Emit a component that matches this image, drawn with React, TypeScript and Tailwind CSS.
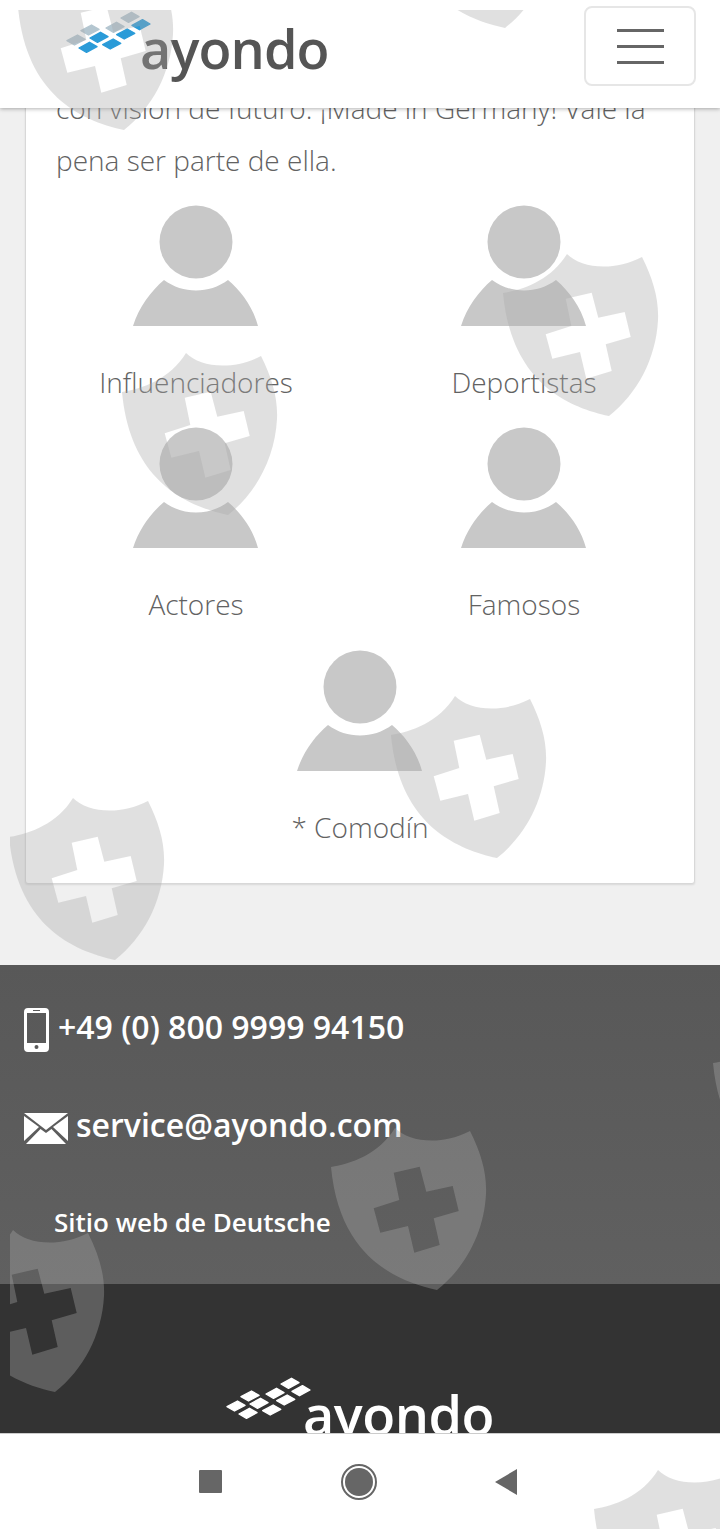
const tiles = [
  { x: 70, y: 13.3, light: true },
  { x: 81, y: 20.7, light: false },
  { x: 55, y: 23.3, light: true },
  { x: 65.7, y: 30, light: false },
  { x: 39, y: 33.3, light: false },
  { x: 51.7, y: 40, light: false },
  { x: 30, y: 26, light: true },
  { x: 16, y: 36, light: true },
  { x: 28, y: 43.3, light: false },
];

function LogoTiles({ dark }: { dark?: boolean }) {
  return (
    <svg viewBox="0 0 100 60" className="w-[100px] h-[60px] flex-none">
      {tiles.map((t) => (
        <path
          key={`${t.x}-${t.y}`}
          d={`M${t.x - 9} ${t.y + 0.7} L${t.x + 1.5} ${t.y - 5} L${t.x + 9} ${t.y - 0.7} L${t.x - 1.5} ${t.y + 5} Z`}
          fill={dark ? "#ffffff" : t.light ? "#b4c6d0" : "#2a9bd8"}
          stroke={dark ? "#ffffff" : t.light ? "#b4c6d0" : "#2a9bd8"}
          strokeWidth="1.4"
          strokeLinejoin="round"
        />
      ))}
    </svg>
  );
}

function Person({ label }: { label: string }) {
  return (
    <div className="flex flex-col items-center h-[222px]">
      <svg viewBox="0 0 126 122" className="w-[126px] h-[122px]">
        <circle cx="63" cy="37" r="36.5" fill="#c8c8c8" />
        <path
          d="M0 121 C6 102 18 86 31 75 C50 89 76 89 95 75 C108 86 120 102 125 121 Z"
          fill="#c8c8c8"
        />
      </svg>
      <span className="mt-[33px] text-[28px] leading-[44px] font-light text-[#626262]">
        {label}
      </span>
    </div>
  );
}

const shields = [
  "left-[8px] top-[-42px]",
  "left-[389px] top-[-144px]",
  "left-[493px] top-[244px]",
  "left-[112px] top-[343px]",
  "left-[381px] top-[686px]",
  "left-[-1px] top-[788px]",
  "left-[321px] top-[1118px]",
  "left-[-61px] top-[1220px]",
  "left-[703px] top-[1014px]",
  "left-[584px] top-[1460px]",
];

function Shield({ className }: { className: string }) {
  return (
    <svg viewBox="0 0 156 163" className={`absolute w-[156px] h-[163px] ${className}`}>
      <path
        fillRule="evenodd"
        fill="#a8a8a8"
        fillOpacity="0.36"
        d="M0 39 C20 36 48 26 64 0 C78 14 110 18 139 3 C150 25 156 45 155 66 C153 105 134 140 106 162 C60 152 8 125 0 39 Z M62.7 44.7 L88.7 38.7 L95.3 63.7 L121.7 58 L127.7 83 L102.7 90.3 L108.7 117 L83.3 124.7 L77 98 L49.3 104.7 L42.7 80.3 L68.3 72 Z"
      />
    </svg>
  );
}

export default function App() {
  return (
    <div className="relative flex flex-col h-[1529px] overflow-hidden bg-white font-['Open_Sans',sans-serif]">
      <header className="relative z-10 flex-none flex items-start justify-between h-[108px] bg-white shadow-[0_1px_4px_rgba(0,0,0,0.3)]">
        <div className="flex items-start pl-[60px] pt-[4px]">
          <LogoTiles />
          <span className="-ml-[20px] mt-[12px] text-[54px] leading-[64px] font-semibold tracking-[-0.9px] text-[#555555]">
            ayondo
          </span>
        </div>
        <button className="flex flex-col justify-center gap-[13px] mt-[6px] mr-[24px] w-[112px] h-[80px] items-center border-2 border-[#e6e6e6] rounded-lg">
          <span className="block w-[47px] h-[3px] bg-[#666666]" />
          <span className="block w-[47px] h-[3px] bg-[#666666]" />
          <span className="block w-[47px] h-[3px] bg-[#666666]" />
        </button>
      </header>

      <main className="flex-1 min-h-0 overflow-hidden bg-[#f0f0f0]">
        <section className="-mt-[43px] mx-[25px] bg-white border border-[#d8d8d8] rounded-[3px] shadow-[0_1px_2px_rgba(0,0,0,0.1)] pt-[16px] h-[819px]">
          <p className="mx-[30px] text-[28px] leading-[52px] font-light text-[#626262]">
            con visión de futuro. ¡Made in Germany! Vale la pena ser parte de ella.
          </p>
          <div className="grid grid-cols-2 mx-[6px] mt-[19px]">
            <Person label="Influenciadores" />
            <Person label="Deportistas" />
            <Person label="Actores" />
            <Person label="Famosos" />
            <div className="col-span-2 mt-[1px]">
              <Person label="* Comodín" />
            </div>
          </div>
        </section>

        <footer className="mt-[81px] text-white">
          <div className="h-[319px] bg-gradient-to-b from-[#585858] to-[#606060] pl-[24px] pt-[43px]">
            <div className="flex items-center gap-[9px] h-[44px]">
              <svg viewBox="0 0 25 44" className="w-[25px] h-[44px]">
                <path
                  fillRule="evenodd"
                  fill="#ffffff"
                  d="M4 0 H21 Q25 0 25 4 V40 Q25 44 21 44 H4 Q0 44 0 40 V4 Q0 0 4 0 Z M3 5 V35 H22 V5 Z M9 2 V3 H16 V2 Z M12.5 37 A2 2 0 1 0 12.5 41 A2 2 0 1 0 12.5 37 Z"
                />
              </svg>
              <span className="pb-[6px] text-[32px] leading-[38px] font-semibold">+49 (0) 800 9999 94150</span>
            </div>
            <div className="flex items-center gap-[8px] mt-[54px] h-[44px]">
              <svg viewBox="0 0 44 31" className="w-[44px] h-[31px]">
                <path fill="#ffffff" d="M0 0 H44 L22 17 Z" />
                <path fill="#ffffff" d="M0 3 V28 L15 14 Z" />
                <path fill="#ffffff" d="M44 3 V28 L29 14 Z" />
                <path fill="#ffffff" d="M2 31 L16.5 16 L22 20 L27.5 16 L42 31 Z" />
              </svg>
              <span className="pb-[6px] text-[32px] leading-[38px] font-semibold">service@ayondo.com</span>
            </div>
            <p className="mt-[54px] ml-[30px] text-[26px] leading-[36px] font-semibold">
              Sitio web de Deutsche
            </p>
          </div>
          <div className="h-[160px] bg-[#333333] flex items-start pl-[220px] pt-[86px]">
            <LogoTiles dark />
            <span className="-ml-[17px] mt-[12px] text-[54px] leading-[64px] font-semibold tracking-[-0.5px] text-white">
              ayondo
            </span>
          </div>
        </footer>
      </main>

      <nav className="flex-none flex items-center h-[96px] bg-white border-t border-[#cccccc]">
        <div className="ml-[199px] w-[23px] h-[23px] bg-[#666666] rounded-[1px]" />
        <div className="ml-[119px] flex items-center justify-center w-[36px] h-[36px] rounded-full border-2 border-[#666666]">
          <div className="w-[28px] h-[28px] rounded-full bg-[#666666]" />
        </div>
        <svg viewBox="0 0 22 26" className="ml-[118px] w-[22px] h-[26px]">
          <path d="M0 13 L22 0 V26 Z" fill="#666666" />
        </svg>
      </nav>

      <div className="absolute z-20 left-[10px] top-[10px] right-0 bottom-0 overflow-hidden pointer-events-none">
        {shields.map((s) => (
          <Shield key={s} className={s} />
        ))}
      </div>
    </div>
  );
}
